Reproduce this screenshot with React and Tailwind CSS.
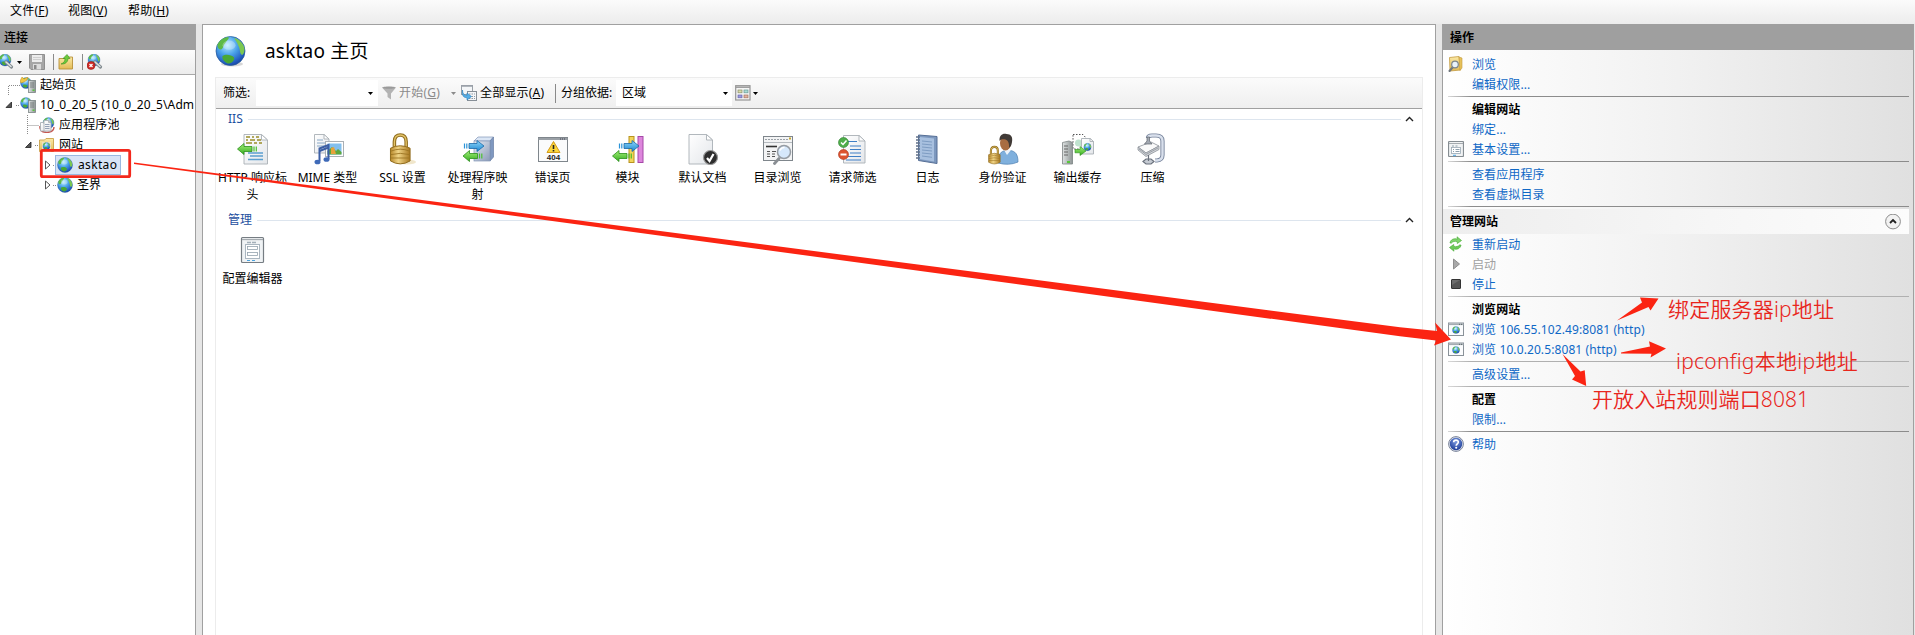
import React from "react";

/* Shared paint definitions for every icon */
function Defs() {
  return (
    <svg className="absolute h-0 w-0" aria-hidden="true">
      <defs>
        <radialGradient id="sea" cx="0.4" cy="0.3" r="0.75">
          <stop offset="0" stopColor="#b9ecff" />
          <stop offset="0.45" stopColor="#4ba3ea" />
          <stop offset="0.85" stopColor="#2058bd" />
          <stop offset="1" stopColor="#1a4596" />
        </radialGradient>
        <linearGradient id="gold" x1="0" x2="1" y1="0" y2="0">
          <stop offset="0" stopColor="#b98a2c" />
          <stop offset="0.4" stopColor="#f0d486" />
          <stop offset="1" stopColor="#a87820" />
        </linearGradient>
        <linearGradient id="paper" x1="0" x2="1" y1="0" y2="1">
          <stop offset="0" stopColor="#ffffff" />
          <stop offset="1" stopColor="#e3e6ea" />
        </linearGradient>
        <linearGradient id="server" x1="0" x2="1" y1="0" y2="0">
          <stop offset="0" stopColor="#dfe3e3" />
          <stop offset="1" stopColor="#8d9494" />
        </linearGradient>
        <linearGradient id="blueArrow" x1="0" x2="0" y1="0" y2="1">
          <stop offset="0" stopColor="#8fd8fb" />
          <stop offset="1" stopColor="#1c86d0" />
        </linearGradient>
        <linearGradient id="greenArrow" x1="0" x2="0" y1="0" y2="1">
          <stop offset="0" stopColor="#a4f07a" />
          <stop offset="1" stopColor="#35ad1f" />
        </linearGradient>
        <linearGradient id="folder" x1="0" x2="0" y1="0" y2="1">
          <stop offset="0" stopColor="#fbe9a6" />
          <stop offset="1" stopColor="#e3bb55" />
        </linearGradient>
        <linearGradient id="steel" x1="0" x2="1" y1="0" y2="1">
          <stop offset="0" stopColor="#e7ebf3" />
          <stop offset="1" stopColor="#8b9ab8" />
        </linearGradient>
        <radialGradient id="help" cx="0.5" cy="0.3" r="0.7">
          <stop offset="0" stopColor="#7c9be0" />
          <stop offset="1" stopColor="#1c3c98" />
        </radialGradient>
      </defs>
    </svg>
  );
}

function Globe({ cx, cy, r }) {
  return (
    <g transform={`translate(${cx} ${cy}) scale(${r / 10})`}>
      <circle r="10" fill="url(#sea)" stroke="#24599a" strokeWidth="0.5" />
      <path d="M-9 -4.500C-7 -8 -4.500 -9.300 -1.500 -9.700C-.500 -8.500 -2.500 -7.500 -3.500 -5.500C-5 -4.500 -4.500 -2 -6.500 -1C-8 -.8 -9 -2 -9 -4.500Z" fill="#5dba45" />
      <path d="M-5.500 3.500C-3.500 2 .5 2.500 2.500 4.500C3 7 0 9 -2 8.600C-4.500 7.500 -6 5.500 -5.500 3.500Z" fill="#49a835" />
      <path d="M2.500 -9.200C6 -8.200 8.500 -5.500 9.500 -2.500C10 .5 9 2 8 2.800C6 1.500 7 -1 5.500 -3.500C5 -5.500 3.500 -7 2.500 -9.200Z" fill="#7cc850" />
      <ellipse cx="-1" cy="-4" rx="4.500" ry="3.200" fill="#fff" opacity="0.28" />
    </g>
  );
}

function Padlock({ x, y, s }) {
  return (
    <g transform={`translate(${x} ${y}) scale(${s})`}>
      <path d="M5 14V8.500C5 3.500 7.500 1.500 11 1.500S17 3.500 17 8.500V14" fill="none" stroke="#8f6d1e" strokeWidth="3.600" />
      <path d="M5 14V8.500C5 3.500 7.500 1.500 11 1.500S17 3.500 17 8.500V14" fill="none" stroke="#e2c268" strokeWidth="1.400" />
      <path d="M1 15Q11 10 21 15V28Q11 34 1 28Z" fill="url(#gold)" stroke="#8f6a1c" />
      <path d="M1.500 18Q11 14 20.500 18M1.500 21.500Q11 19 20.500 21.500M1.500 25Q11 25 20.500 25" fill="none" stroke="#9c7422" strokeWidth="0.900" />
    </g>
  );
}

function BlueArrow({ x, y }) {
  return (
    <g transform={`translate(${x} ${y})`} fill="url(#blueArrow)" stroke="#1a6aa8" strokeWidth="0.800">
      <path d="M5 3.500H13V.5L20 6L13 11.500V8.500H5Z" />
      <path d="M0.500 3.500V8.500M2.800 3.500V8.500" stroke="#2a93d8" strokeWidth="1.200" />
    </g>
  );
}

function GreenArrow({ x, y }) {
  return (
    <g transform={`translate(${x} ${y})`} fill="url(#greenArrow)" stroke="#2b8f1c" strokeWidth="0.800">
      <path d="M15 3.500H7V.5L0.500 6L7 11.500V8.500H15Z" />
      <path d="M17 3.500V8.500M19.300 3.500V8.500" stroke="#4cc130" strokeWidth="1.200" />
    </g>
  );
}

function Page({ x, y, w, h, fold = 6 }) {
  return (
    <g transform={`translate(${x} ${y})`}>
      <path d={`M.5 .5H${w - fold}L${w} ${fold}V${h}H.5Z`} fill="url(#paper)" stroke="#a9b0b6" strokeWidth="0.900" />
      <path d={`M${w - fold} .5V${fold}H${w}Z`} fill="#fff" stroke="#a9b0b6" strokeWidth="0.900" />
    </g>
  );
}

function Svg({ size = 16, children, className = "" }) {
  return (
    <svg width={size} height={size} viewBox={`0 0 ${size} ${size}`} className={`block shrink-0 ${className}`}>
      {children}
    </svg>
  );
}

/* 16px icons */
const Servers = ({ star }) => (
  <Svg>
    <Globe cx={6} cy={6} r={5.5} />
    {star && <path d="M0 4L2 0L4 2L8 0L7 3L4 5L1 6Z" fill="#f1c645" stroke="#c28b18" strokeWidth="0.500" />}
    <rect x="8.500" y="3.500" width="7" height="12" fill="url(#server)" stroke="#7c8484" strokeWidth="0.800" />
    <path d="M10 6H14M10 8H14M10 10H14" stroke="#6a7070" strokeWidth="0.800" />
    <rect x="12.500" y="12.500" width="2" height="1.500" fill="#57c63b" />
  </Svg>
);
const AppPool = () => (
  <Svg>
    <path d="M1 9Q0 15 8 15.500Q15 15 15 10" fill="none" stroke="#c5564f" strokeWidth="1.400" />
    <Globe cx={9.500} cy={6} r={5.500} />
    <Page x={1} y={5} w={6} h={9} fold={2} />
    <Page x={4.500} y={3} w={7.500} h={11} fold={2.500} />
    <path d="M6 7.500H10.500M6 9.500H10.500M6 11.500H10.500" stroke="#8a98b0" strokeWidth="0.900" />
  </Svg>
);
const SitesFolder = () => (
  <Svg>
    <path d="M.5 3H5.500L7 1.500H14.500V14.500H.5Z" fill="url(#folder)" stroke="#c9a24a" strokeWidth="0.900" />
    <rect x="3" y="5" width="9" height="9.500" fill="#eee3c0" />
    <Globe cx={7.500} cy={9} r={3.600} />
  </Svg>
);
const SiteGlobe = () => (
  <Svg>
    <Globe cx={8} cy={8} r={7.500} />
  </Svg>
);
const ConnectIcon = ({ broken }) => (
  <Svg>
    <Globe cx={7} cy={6} r={6} />
    <path d="M8 8L13.500 13" stroke="#7e878c" strokeWidth="3.200" strokeLinecap="round" />
    <path d="M8 8L13 12.500" stroke="#dde2e4" strokeWidth="1.600" strokeLinecap="round" />
    {broken && (
      <g>
        <circle cx="4" cy="11.500" r="4" fill="#cf2b27" stroke="#8f1613" strokeWidth="0.500" />
        <path d="M2.500 10L5.500 13M5.500 10L2.500 13" stroke="#fff" strokeWidth="1.300" />
      </g>
    )}
  </Svg>
);
const SaveIcon = () => (
  <Svg>
    <path d="M.5 .5H15.500V15.500H2L.5 14Z" fill="#a6a6a6" stroke="#8f8f8f" />
    <rect x="3" y="1" width="10" height="7" fill="#ececec" />
    <path d="M4 3.500H12M4 5.500H12" stroke="#cfcfcf" />
    <rect x="4" y="10" width="8" height="5.500" fill="#dcdcdc" />
    <rect x="5" y="11" width="2.500" height="4" fill="#8b8b8b" />
  </Svg>
);
const FolderUp = () => (
  <Svg>
    <path d="M1 4.500H9L10.500 3H14.500V15H1Z" fill="url(#folder)" stroke="#b8913a" strokeWidth="0.900" />
    <path d="M3 10C6 9 7 7 7 4.500H5L9 .5L12 4.500H10C10 8 7 10.500 3 10Z" fill="#6ccb3d" stroke="#3d8f20" strokeWidth="0.600" />
  </Svg>
);
const BrowseFolder = () => (
  <Svg>
    <path d="M1.500 1.500L11 .5L12.500 14L2 15Z" fill="url(#folder)" stroke="#c39b40" strokeWidth="0.800" />
    <path d="M11 1L14 2V12L12 14.500Z" fill="#e7c25b" stroke="#c39b40" strokeWidth="0.600" />
    <path d="M5 11L1.500 15" stroke="#6f767c" strokeWidth="2" strokeLinecap="round" />
    <circle cx="7" cy="8.500" r="3.300" fill="#e9f3fb" stroke="#7c858c" strokeWidth="1.200" />
  </Svg>
);
const SettingsForm = () => (
  <Svg>
    <rect x="0.500" y="0.500" width="15" height="15" rx="1" fill="#f1f3f4" stroke="#868d92" strokeWidth="1.200" />
    <path d="M1 2.500H15" stroke="#a5abb0" />
    <path d="M4 5H6M7.500 5H9.500" stroke="#8fa0ac" />
    <rect x="3.500" y="6.500" width="9" height="6" fill="#fff" stroke="#9aa8b3" strokeWidth="0.800" />
    <path d="M5 8.500H6M7.500 8.500H11.500M5 10.500H6M7.500 10.500H11.500" stroke="#7f93a3" strokeWidth="0.900" />
    <path d="M5 14.300H8" stroke="#4aa3e0" />
  </Svg>
);
const Restart = () => (
  <Svg>
    <path d="M2 7C2.500 3.500 6 2 9.500 3.200L9 .8L13.500 4.500L9.300 7.500L9.200 5.600C7 5 4.500 5.500 3.500 7Z" fill="#7fd46b" stroke="#4cae3a" strokeWidth="0.700" />
    <path d="M13 9C12.500 12.500 9 14 5.500 12.800L6 15.200L1.500 11.500L5.700 8.500L5.800 10.400C8 11 10.500 10.500 11.500 9Z" fill="#6ccb58" stroke="#4cae3a" strokeWidth="0.700" />
  </Svg>
);
const Play = () => (
  <Svg>
    <path d="M5.500 3L11.500 8L5.500 13Z" fill="#a9a9a9" stroke="#8f8f8f" />
  </Svg>
);
const Stop = () => (
  <Svg>
    <rect x="3.500" y="3.500" width="9" height="9" rx="0.500" fill="#555" stroke="#333" />
    <path d="M4 9V4H12Z" fill="#6c6c6c" />
  </Svg>
);
const BrowserIcon = () => (
  <Svg>
    <rect x="0.500" y="2" width="15" height="12.500" fill="#fbfcfd" stroke="#8a9299" />
    <path d="M.5 3.300H15.500" stroke="#a4abb1" strokeWidth="1.600" />
    <path d="M11 3.300H14" stroke="#566" strokeWidth="1" strokeDasharray="1 1" />
    <Globe cx={8} cy={9} r={3.600} />
  </Svg>
);
const HelpIcon = () => (
  <Svg>
    <circle cx="8" cy="8" r="7.400" fill="#dfe4ee" stroke="#7b8499" />
    <circle cx="8" cy="8" r="6.200" fill="url(#help)" />
    <path d="M5.700 6.300C5.700 3.400 10.400 3.500 10.300 6.200C10.200 7.800 8.200 7.900 8.200 9.700" fill="none" stroke="#fff" strokeWidth="1.700" />
    <circle cx="8.200" cy="11.800" r="1.050" fill="#fff" />
  </Svg>
);
const Funnel = ({ className }) => (
  <Svg className={className}>
    <path d="M1 2.500C1 1 15 1 15 2.500L10 8.500V14.500L6.500 12V8.500Z" fill="#b3b3b3" />
    <ellipse cx="8" cy="2.700" rx="6" ry="1" fill="#9a9a9a" />
  </Svg>
);
const ShowAll = ({ className }) => (
  <Svg className={className}>
    <rect x="0.500" y="0.500" width="11" height="9" fill="#f4f6f8" stroke="#9aa1a8" />
    <path d="M0 1H12" stroke="#9aa1a8" strokeWidth="1.500" />
    <rect x="6.500" y="6.500" width="9" height="9" fill="#f4f6f8" stroke="#878f97" />
    <path d="M8 9H14M8 11.500H14M8 13.500H14" stroke="#8f9aa5" strokeDasharray="1.500 1" />
    <path d="M1.500 5Q1.500 10.500 6 10.500V8L10.500 11.500L6 15V12.800Q0 12.500 1.500 5Z" fill="#55aee6" stroke="#2a7fbd" strokeWidth="0.600" />
  </Svg>
);
const ViewGrid = ({ className }) => (
  <Svg className={className}>
    <rect x="0.700" y="0.700" width="14.300" height="14.300" fill="#f6f6f6" stroke="#949494" strokeWidth="1.200" />
    <path d="M1 2.200H15" stroke="#9b9b9b" strokeWidth="1.500" />
    <rect x="3" y="5" width="4" height="2.800" fill="#d8dba8" stroke="#8a8f6a" strokeWidth="0.700" />
    <rect x="9" y="5" width="4" height="2.800" fill="#a9dbd4" stroke="#6a9a94" strokeWidth="0.700" />
    <rect x="3" y="10" width="4" height="2.800" fill="#9c9ae0" stroke="#6866a8" strokeWidth="0.700" />
    <rect x="9" y="10" width="4" height="2.800" fill="#e0b3a0" stroke="#a5735f" strokeWidth="0.700" />
  </Svg>
);

/* 32px feature icons */
const features = [
  {
    label: "HTTP 响应标头",
    icon: (
      <Svg size={32}>
        <Page x={6.500} y={1} w={24} h={30} />
        <path d="M9 4H13M15 4H17M19 4H22M9 7H11M13 7H18M20 7H24M9 10H15M17 10H20M22 10H25" stroke="#9a8e2a" strokeWidth="1.500" />
        <path d="M11 20H26M13 23H26M11 26.500H26" stroke="#5b9fd0" strokeWidth="1.300" />
        <GreenArrow x={0} y={10} />
      </Svg>
    ),
  },
  {
    label: "MIME 类型",
    icon: (
      <Svg size={32}>
        <Page x={2} y={1} w={15} h={19} fold={5} />
        <path d="M5 7H11M5 10H13M5 13H13" stroke="#88a8c6" />
        <rect x="13.500" y="8.500" width="18" height="15" fill="#fff" stroke="#aab0b5" />
        <rect x="15.500" y="10.500" width="14" height="11" fill="#82bfee" />
        <path d="M15.500 21.500V18L20 14L24 18L26 16L29.500 19V21.500Z" fill="#5fa83c" />
        <path d="M19 15L22 14L24 21H19Z" fill="#e8a23a" />
        <path d="M7.500 28V15.500L16.500 12V26" fill="none" stroke="#3c5fa5" strokeWidth="2" />
        <path d="M7.500 18L16.500 14.500" stroke="#3c5fa5" strokeWidth="2" />
        <ellipse cx="5.500" cy="29" rx="3" ry="2.300" fill="#3f6ab8" />
        <ellipse cx="14.500" cy="26.500" rx="3" ry="2.300" fill="#3f6ab8" />
      </Svg>
    ),
  },
  {
    label: "SSL 设置",
    icon: (
      <Svg size={32}>
        <ellipse cx="20" cy="29" rx="9" ry="2.500" fill="#e9dcb5" opacity="0.700" />
        <Padlock x={2.500} y={0.500} s={0.980} />
      </Svg>
    ),
  },
  {
    label: "处理程序映射",
    icon: (
      <Svg size={32}>
        <path d="M12 8L16 4H31.500L28 8Z" fill="#dbe6f5" stroke="#8397b8" strokeWidth="0.700" />
        <path d="M28 8L31.500 4V24L28 28Z" fill="#7f98c0" stroke="#6a7fa5" strokeWidth="0.700" />
        <rect x="12" y="8" width="16" height="20" fill="url(#steel)" stroke="#8397b8" strokeWidth="0.700" />
        <BlueArrow x={2} y={7} />
        <GreenArrow x={0.500} y={17} />
      </Svg>
    ),
  },
  {
    label: "错误页",
    icon: (
      <Svg size={32}>
        <rect x="1.500" y="4.500" width="29" height="24" fill="#fafbfc" stroke="#7f868c" />
        <path d="M1.500 6H30.500" stroke="#9aa0a6" strokeWidth="2" />
        <path d="M23 6H29" stroke="#445" strokeDasharray="1 1" />
        <path d="M16.500 8.500L23 19.500H10Z" fill="#fbd63c" stroke="#d39a17" strokeLinejoin="round" />
        <path d="M16.500 12V16M16.500 17V18.500" stroke="#222" strokeWidth="1.600" />
        <text x="16.500" y="27" textAnchor="middle" fontSize="8" fontWeight="bold" fontFamily="Liberation Sans, sans-serif" fill="#222">
          404
        </text>
      </Svg>
    ),
  },
  {
    label: "模块",
    icon: (
      <Svg size={32}>
        <rect x="17" y="3.500" width="5" height="26" fill="#f3d55a" stroke="#b8931f" />
        <rect x="26" y="3.500" width="5" height="26" fill="#dd86dc" stroke="#a548a8" />
        <BlueArrow x={7} y={7} />
        <GreenArrow x={0} y={17} />
      </Svg>
    ),
  },
  {
    label: "默认文档",
    icon: (
      <Svg size={32}>
        <Page x={1.500} y={1} w={24} h={30} />
        <circle cx="23.500" cy="24.500" r="7" fill="#2d2d2d" stroke="#9a9a9a" strokeWidth="1.200" />
        <path d="M20 25L22.500 28L26.500 21" fill="none" stroke="#fff" strokeWidth="2.200" />
      </Svg>
    ),
  },
  {
    label: "目录浏览",
    icon: (
      <Svg size={32}>
        <rect x="1.500" y="3.500" width="29" height="24" fill="#f3f4f5" stroke="#7f868c" />
        <path d="M3 6.500H27" stroke="#9aa0a6" strokeDasharray="2 1" />
        <path d="M27 5.500H29" stroke="#c7a830" strokeWidth="2" />
        <path d="M2 9.500H30" stroke="#b5babf" />
        <path d="M4 13.500H15" stroke="#333" strokeWidth="1.600" />
        <path d="M5 18.500H8M10 18.500H14M5 21H8M10 21H13M5 23.500H8M10 23.500H13" stroke="#555" />
        <path d="M17 25.500L12.500 30.500" stroke="#8a8f94" strokeWidth="2.800" strokeLinecap="round" />
        <circle cx="22" cy="19" r="6.500" fill="#d6e8fb" stroke="#969ca3" strokeWidth="1.500" />
        <path d="M18 17.500Q19 14.500 22.500 14.500" fill="none" stroke="#fff" strokeWidth="1.500" />
      </Svg>
    ),
  },
  {
    label: "请求筛选",
    icon: (
      <Svg size={32}>
        <Page x={6} y={2} w={22} h={28} />
        <path d="M11 8.500H20M13 13H24M13 16.500H24M13 20H24M11 23.500H24M9 27H24" stroke="#3f7fc6" strokeWidth="1.200" />
        <circle cx="6.500" cy="9.500" r="5" fill="#4fae4a" stroke="#2f7d30" strokeWidth="0.600" />
        <path d="M4 9.500L6 11.500L9.500 7.500" fill="none" stroke="#fff" strokeWidth="1.500" />
        <circle cx="6.500" cy="21.500" r="5" fill="#dd5330" stroke="#a7331b" strokeWidth="0.600" />
        <path d="M3.500 21.500H9.500" stroke="#fff" strokeWidth="2" />
      </Svg>
    ),
  },
  {
    label: "日志",
    icon: (
      <Svg size={32}>
        <path d="M6.500 2L25 3.500V30.500L6.500 27.500Z" fill="#7d98be" stroke="#566f96" />
        <path d="M7.500 4L22 5.500V28.500L7.500 26Z" fill="#a8c0df" />
        <path d="M10 8L20 9M10 11L20 12M10 14L20 15M10 17L20 18M10 20L20 21M10 23L20 24.300" stroke="#7e9cc2" />
        <path d="M4 4H8M4 7H8M4 10H8M4 13H8M4 16H8M4 19H8M4 22H8M4 25H8" stroke="#62718a" strokeWidth="1.300" />
      </Svg>
    ),
  },
  {
    label: "身份验证",
    icon: (
      <Svg size={32}>
        <path d="M11 30C11 21 14 18 19 17.500H23C28 18 31 21 31 29Q22 33 11 30Z" fill="#7fb0dd" stroke="#4d7fb0" strokeWidth="0.700" />
        <path d="M17 17L20 22L24 17Z" fill="#eef4fa" />
        <ellipse cx="18.500" cy="10" rx="5.500" ry="7.500" fill="#a86d42" />
        <path d="M12.500 8C12 2 16 0 19.500 1C24 1 26 4 25 9C24.500 13 23 14 22 15C22.500 10 21 7.500 18.500 6.500C15 6 13.500 6.500 12.500 8Z" fill="#403a36" />
        <Padlock x={1} y={13} s={0.580} />
      </Svg>
    ),
  },
  {
    label: "输出缓存",
    icon: (
      <Svg size={32}>
        <path d="M11 1.500H21L24 5V16H11Z" fill="#fff" stroke="#555" strokeDasharray="1.500 1.500" />
        <circle cx="16.500" cy="10" r="3.500" fill="#bfe3cf" />
        <path d="M.5 9.500L7 8L10.500 9.500V31H.5Z" fill="url(#server)" stroke="#7c8484" strokeWidth="0.800" />
        <path d="M2 13H6M2 16H6M2 19H6M2 22H6" stroke="#666" />
        <path d="M5 29H8" stroke="#57c63b" strokeWidth="2" />
        <Page x={19} y={5} w={12.500} h={16} fold={3.500} />
        <Globe cx={25.500} cy={14} r={3.700} />
        <path d="M13 16.500H18V13.500L24 18L18 22.500V19.800H13Z" fill="url(#greenArrow)" stroke="#2b8f1c" strokeWidth="0.600" />
      </Svg>
    ),
  },
  {
    label: "压缩",
    icon: (
      <Svg size={32}>
        <path d="M11 5Q11 2.500 15 2.500H19Q25.500 2.500 25.500 8V22Q25.500 27 20 27.500H18" fill="none" stroke="#76839b" strokeWidth="4.200" />
        <path d="M11 5Q11 2.500 15 2.500H19Q25.500 2.500 25.500 8V22Q25.500 27 20 27.500H18" fill="none" stroke="#d9e0ec" strokeWidth="2.400" />
        <path d="M1 14L14 9L22 13L9 20Z" fill="#fafafa" stroke="#8d9299" strokeWidth="0.800" />
        <path d="M1 14V17L9 23.500L22 16.500V13L9 20Z" fill="#d3d6da" stroke="#8d9299" strokeWidth="0.800" />
        <path d="M2 16L9 21.500L21 15" fill="none" stroke="#8d9299" strokeWidth="0.800" />
        <path d="M10 4V8L7.500 11H15L12.500 8V4Z" fill="#a2a8b1" stroke="#5e646d" strokeWidth="0.700" />
        <path d="M11.500 22V28M6 28.500L9 26H14L17 28.500L14 31H9Z" fill="#c5cad2" stroke="#6a717c" strokeWidth="1.200" />
      </Svg>
    ),
  },
];

const ConfigEditor = () => (
  <Svg size={32}>
    <rect x="4.500" y="3.500" width="22" height="25" rx="1" fill="#f0f3f5" stroke="#767d83" strokeWidth="1.200" />
    <path d="M5 5.500H26" stroke="#a5abb0" strokeWidth="1.300" />
    <path d="M10 8.500H14M15 8.500H19" stroke="#a3afb9" strokeWidth="1.300" />
    <rect x="8.500" y="10.500" width="14" height="14" fill="#fff" stroke="#aab6c0" />
    <rect x="10.500" y="12.500" width="10" height="3" fill="#fff" stroke="#94a3af" strokeWidth="0.800" />
    <rect x="10.500" y="18.500" width="10" height="3" fill="#fff" stroke="#94a3af" strokeWidth="0.800" />
    <path d="M10 26.500H13M15 26.500H18" stroke="#4aa3e0" strokeWidth="1.200" />
  </Svg>
);

function Caret({ className = "" }) {
  return (
    <svg width="5" height="3" viewBox="0 0 5 3" className={`block shrink-0 ${className}`}>
      <path d="M0 0H5L2.500 3Z" fill="currentColor" />
    </svg>
  );
}

/* Tree gutter: dotted connectors and the expander arrow */
function Gutter({ width, lines, open, closed }) {
  return (
    <svg width={width} height="20" viewBox={`0 0 ${width} 20`} className="block shrink-0">
      <path d={lines} fill="none" stroke="#8a8a8a" strokeDasharray="1 1" />
      {open !== undefined && <path d={`M${open} 12.500H${open + 5.5}V7Z`} fill="#555" stroke="#222" strokeWidth="0.800" />}
      {closed !== undefined && <path d={`M${closed} 6V14L${closed + 4.500} 10Z`} fill="#fff" stroke="#555" />}
    </svg>
  );
}

function TreeRow({ gutter, icon, label }) {
  return (
    <div className="flex h-5 items-center whitespace-nowrap">
      {gutter}
      {icon}
      <span className="ml-1 tracking-[0.1px]">{label}</span>
    </div>
  );
}

function Action({ icon, label, tone = "text-[#0f68c6]" }) {
  return (
    <div className={`flex h-5 items-center whitespace-nowrap ${tone}`}>
      <span className="ml-[5px] mr-2 flex w-4 shrink-0">{icon}</span>
      <span className="pt-[2px] tracking-[0.1px]">{label}</span>
    </div>
  );
}

const Heading = ({ label }) => <Action label={label} tone="font-bold text-black" />;

function Rule({ soft }) {
  return (
    <div className="flex h-[5px] items-start pl-[5px] pr-[4px] pt-[2px]">
      <div className={`h-px flex-1 bg-linear-to-r from-[#d8d8d8] to-5% ${soft ? "to-[#b0b0b0]" : "to-[#8c8c8c]"}`} />
    </div>
  );
}

function GroupHeader({ label }) {
  return (
    <div className="flex h-5 items-center pl-3 pr-[8px]">
      <span className="text-[#1e50a0]">{label}</span>
      <span className="ml-[5px] h-px flex-1 bg-[#dde5ee]" />
      <svg width="9" height="6" viewBox="0 0 9 6" className="ml-1 block">
        <path d="M1 5L4.500 1.500L8 5" fill="none" stroke="#222" strokeWidth="1.400" />
      </svg>
    </div>
  );
}

function Feature({ icon, label }) {
  return (
    <div className="flex w-[75px] flex-col items-center">
      {icon}
      <span className="mt-1 w-[75px] px-[2px] text-center leading-[17px]">{label}</span>
    </div>
  );
}

function MenuItem({ text, hotkey, className = "" }) {
  return (
    <span className={className}>
      {text}(<u className="underline-offset-1">{hotkey}</u>)
    </span>
  );
}

export default function App() {
  return (
    <div className="relative flex h-[635px] w-[1915px] flex-col overflow-hidden bg-[#e6e6e6] font-['Noto_Sans','Noto_Sans_CJK_SC',sans-serif] text-[12px] leading-[16px] text-black">
      <Defs />
      <header className="flex h-6 items-start bg-linear-to-b from-[#fbfbfb] to-[#ececec] pl-[10px] pt-[3px] tracking-[0.2px]">
        <MenuItem text="文件" hotkey="F" className="w-[58px]" />
        <MenuItem text="视图" hotkey="V" className="w-[60px]" />
        <MenuItem text="帮助" hotkey="H" />
      </header>

      <div className="flex min-h-0 flex-1">
        <aside className="flex w-[196px] shrink-0 flex-col overflow-hidden border-r border-[#a0a0a0] bg-white">
          <div className="flex h-[26px] items-center bg-[#9f9f9f] pl-1 pt-[2px] font-medium">连接</div>
          <div className="flex h-[25px] items-center border-b border-[#a8a8a8] bg-linear-to-b from-[#fdfdfd] to-[#ececec]">
            <div className="-ml-[2px] flex items-center">
              <ConnectIcon />
              <Caret className="ml-[3px]" />
            </div>
            <div className="ml-[7px]"><SaveIcon /></div>
            <div className="ml-2 h-4 w-px bg-[#8a8a8a]" />
            <div className="ml-1"><FolderUp /></div>
            <div className="ml-[8px] h-4 w-px bg-[#8a8a8a]" />
            <div className="ml-1"><ConnectIcon broken /></div>
          </div>
          <div className="flex flex-col">
            <TreeRow gutter={<Gutter width={20} lines="M8.500 20V10.500H20" />} icon={<Servers star />} label="起始页" />
            <TreeRow gutter={<Gutter width={20} lines="M16 10.500H20" open={6} />} icon={<Servers />} label="10_0_20_5 (10_0_20_5\Adm" />
            <TreeRow gutter={<Gutter width={39} lines="M27.500 0V20M27.500 10.500H39" />} icon={<AppPool />} label="应用程序池" />
            <TreeRow gutter={<Gutter width={39} lines="M35 10.500H39" open={25.5} />} icon={<SitesFolder />} label="网站" />
            <div className="flex h-5 items-center">
              <Gutter width={55} lines="M53 10.500H55" closed={45.5} />
              <div className="flex h-5 w-[66px] items-center border border-[#9ab8e0] bg-[#d8e4f6] pl-[1px]">
                <SiteGlobe />
                <span className="ml-[5px] tracking-[0.35px]">asktao</span>
              </div>
            </div>
            <TreeRow gutter={<Gutter width={57} lines="M53 10.500H56" closed={45.5} />} icon={<SiteGlobe />} label="圣界" />
          </div>
        </aside>

        <main className="ml-[6px] flex w-[1234px] shrink-0 flex-col border-x border-t border-[#a0a0a0] bg-white pl-3 pr-3">
          <div className="flex h-[52px] items-center">
            <Svg size={32}>
              <ellipse cx="17" cy="29" rx="11" ry="2.500" fill="#bbb" opacity="0.600" />
              <Globe cx={15.500} cy={16} r={14.500} />
            </Svg>
            <h1 className="ml-[18px] text-[19px] leading-6 tracking-[0.2px]">asktao 主页</h1>
          </div>
          <div className="flex min-h-0 flex-1 flex-col border-x border-t border-[#ececec]">
            <div className="flex h-[31px] shrink-0 items-center whitespace-nowrap border-b border-[#a0a0a0] bg-linear-to-b from-[#fbfbfb] to-[#efefef] pl-[7px]">
              <span className="w-[33px]">筛选:</span>
              <div className="flex h-[26px] w-[122px] items-center justify-end bg-white pr-[5px]">
                <Caret />
              </div>
              <Funnel className="ml-[3px]" />
              <span className="ml-[2px] w-[42px] tracking-[0.2px] text-[#8b8b8b]">开始(<u>G</u>)</span>
              <Caret className="ml-[10px] text-[#8b8b8b]" />
              <ShowAll className="ml-[5px]" />
              <span className="ml-[3px] w-[64px] tracking-[0.2px]">全部显示(<u>A</u>)</span>
              <div className="ml-[11px] h-[19px] w-px bg-[#8a8a8a]" />
              <span className="ml-[5px] w-[50px]">分组依据:</span>
              <div className="ml-[5px] flex h-[26px] w-[116px] items-center justify-between bg-white pl-[6px] pr-[4px]">
                <span>区域</span>
                <Caret />
              </div>
              <ViewGrid className="ml-[3px]" />
              <Caret className="ml-[2px]" />
            </div>
            <GroupHeader label="IIS" />
            <div className="-ml-px flex h-[81px] pt-1">
              {features.map((f) => (
                <Feature key={f.label} icon={f.icon} label={f.label} />
              ))}
            </div>
            <GroupHeader label="管理" />
            <div className="-ml-px flex pt-1">
              <Feature icon={<ConfigEditor />} label="配置编辑器" />
            </div>
          </div>
        </main>

        <aside className="ml-[6px] flex w-[472px] shrink-0 flex-col border-x border-[#a0a0a0] bg-linear-to-r from-[#ffffff] via-[#f1f1f1] to-[#e0e0e0]">
          <div className="flex h-[26px] items-center bg-[#9f9f9f] pl-[7px] pt-[2px] font-bold">操作</div>
          <div className="flex flex-col pt-1">
            <Action icon={<BrowseFolder />} label="浏览" />
            <Action label="编辑权限..." />
            <Rule />
            <Heading label="编辑网站" />
            <Action label="绑定..." />
            <Action icon={<SettingsForm />} label="基本设置..." />
            <Rule />
            <Action label="查看应用程序" />
            <Action label="查看虚拟目录" />
            <Rule />
            <div className="mr-1 flex h-[25px] items-center justify-between bg-linear-to-r from-[#eeeeee] to-[#fcfcfc] pl-[7px] pr-[8px]">
              <span className="font-bold">管理网站</span>
              <Svg>
                <circle cx="8" cy="7.500" r="7.400" fill="#f2f2f2" stroke="#8b8b8b" />
                <path d="M5 9L8 6L11 9" fill="none" stroke="#222" strokeWidth="1.800" />
              </Svg>
            </div>
            <Action icon={<Restart />} label="重新启动" />
            <Action icon={<Play />} label="启动" tone="text-[#a0a0a0]" />
            <Action icon={<Stop />} label="停止" />
            <Rule soft />
            <Heading label="浏览网站" />
            <Action icon={<BrowserIcon />} label="浏览 106.55.102.49:8081 (http)" />
            <Action icon={<BrowserIcon />} label="浏览 10.0.20.5:8081 (http)" />
            <Rule soft />
            <Action label="高级设置..." />
            <Rule soft />
            <Heading label="配置" />
            <Action label="限制..." />
            <Rule />
            <Action icon={<HelpIcon />} label="帮助" />
          </div>
        </aside>
      </div>

      {/* Annotations laid over the window */}
      <svg width="1915" height="635" viewBox="0 0 1915 635" className="pointer-events-none absolute left-0 top-0">
        <rect x="41.300" y="150.300" width="88.400" height="26.400" rx="1.500" fill="none" stroke="#f3281c" strokeWidth="2.800" />
        <g fill="#fb2412">
          <path d="M134 162.500L1400 327.300L1437 331L1435 322.500L1451 339.500L1434 345.500L1436 340.500L1400 336.300L134 164Z" />
          <path d="M1617 320.500L1642 302.500L1640 297.500L1658.500 298.500L1650.500 310.500L1648.500 307Z" />
          <path d="M1621 352.500L1650 346.500L1649 341.300L1666 348.500L1650.500 357.500L1651.500 353.700L1621 353.500Z" />
          <path d="M1562.500 354L1580.500 371.500L1584.700 370.300L1586.200 386L1572 379.500L1575 376Z" />
        </g>
      </svg>
      <span className="absolute left-[1668px] top-[295px] whitespace-nowrap text-[21px] font-[350] leading-7 tracking-[0.2px] text-[#e8261c]">绑定服务器ip地址</span>
      <span className="absolute left-[1676px] top-[347px] whitespace-nowrap text-[21px] font-[350] leading-7 tracking-[0.3px] text-[#e8261c]">ipconfig本地ip地址</span>
      <span className="absolute left-[1592px] top-[385px] whitespace-nowrap text-[21px] font-[350] leading-7 tracking-[0.1px] text-[#e8261c]">开放入站规则端口8081</span>
    </div>
  );
}
